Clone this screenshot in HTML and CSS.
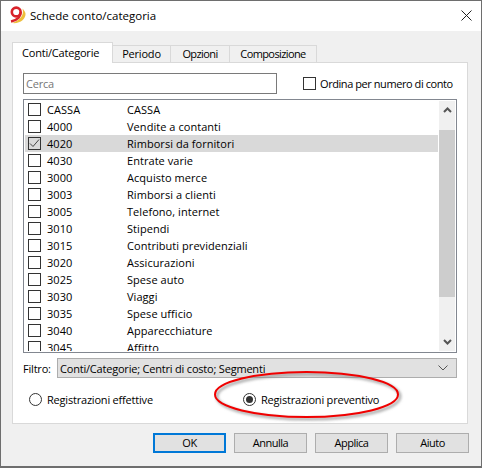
FILE: index.html
```html
<!DOCTYPE html>
<html lang="it">
<head>
  <meta charset="UTF-8">
  <title>Schede conto/categoria</title>
  <link rel="stylesheet" href="styles.css">
</head>
<body>
<div class="window">
  <div class="titlebar">
    <svg class="logo" width="20" height="20" viewBox="0 -1 20 20">
      <path d="M13.500 2.500C15.500 9 11 14.500 3 17c8 1 14-4 13.500-9.500-.3-2-2-4-3-5z" fill="#eebf3d"/>
      <circle cx="7.200" cy="6" r="4.400" fill="none" stroke="#d8232a" stroke-width="2.600"/>
      <path d="M11.600 6c.4 4-2.500 8-9.600 9.500" fill="none" stroke="#d8232a" stroke-width="2.600"/>
    </svg>
    <span class="title">Schede conto/categoria</span>
    <svg class="close" width="11" height="11" viewBox="0 0 11 11">
      <path d="M.5.500l10 10M10.500.500l-10 10" stroke="#222" stroke-width="1" fill="none"/>
    </svg>
  </div>

  <div class="body">
    <div class="tabs">
      <div class="tab active">Conti/Categorie</div>
      <div class="tab tab-period">Periodo</div>
      <div class="tab tab-options">Opzioni</div>
      <div class="tab tab-layout">Composizione</div>
    </div>

    <div class="pane">
      <div class="search-row">
        <div class="search">Cerca</div>
        <label class="sort-check"><span class="box"></span>Ordina per numero di conto</label>
      </div>

      <div class="list">
        <div class="rows">
          <div class="row"><span class="box"></span><span class="code">CASSA</span><span>CASSA</span></div>
          <div class="row"><span class="box"></span><span class="code">4000</span><span>Vendite a contanti</span></div>
          <div class="row selected">
            <span class="box">
              <svg width="13" height="13" viewBox="0 0 13 13"><path d="M2 6.500l3 3 6-7" fill="none" stroke="#444" stroke-width="1"/></svg>
            </span>
            <span class="code">4020</span><span>Rimborsi da fornitori</span>
          </div>
          <div class="row"><span class="box"></span><span class="code">4030</span><span>Entrate varie</span></div>
          <div class="row"><span class="box"></span><span class="code">3000</span><span>Acquisto merce</span></div>
          <div class="row"><span class="box"></span><span class="code">3003</span><span>Rimborsi a clienti</span></div>
          <div class="row"><span class="box"></span><span class="code">3005</span><span>Telefono, internet</span></div>
          <div class="row"><span class="box"></span><span class="code">3010</span><span>Stipendi</span></div>
          <div class="row"><span class="box"></span><span class="code">3015</span><span>Contributi previdenziali</span></div>
          <div class="row"><span class="box"></span><span class="code">3020</span><span>Assicurazioni</span></div>
          <div class="row"><span class="box"></span><span class="code">3025</span><span>Spese auto</span></div>
          <div class="row"><span class="box"></span><span class="code">3030</span><span>Viaggi</span></div>
          <div class="row"><span class="box"></span><span class="code">3035</span><span>Spese ufficio</span></div>
          <div class="row"><span class="box"></span><span class="code">3040</span><span>Apparecchiature</span></div>
          <div class="row"><span class="box"></span><span class="code">3045</span><span>Affitto</span></div>
        </div>
        <div class="scrollbar">
          <svg class="arrow" width="9" height="6" viewBox="0 0 9 6"><path d="M1 5l3.500-3.500L8 5" fill="none" stroke="#555" stroke-width="2"/></svg>
          <div class="track"><div class="thumb"></div></div>
          <svg class="arrow" width="9" height="6" viewBox="0 0 9 6"><path d="M1 1l3.500 3.500L8 1" fill="none" stroke="#555" stroke-width="2"/></svg>
        </div>
      </div>

      <div class="filter-row">
        <span class="filter-label">Filtro:</span>
        <div class="combo">
          <span>Conti/Categorie; Centri di costo; Segmenti</span>
          <svg width="10" height="6" viewBox="0 0 10 6"><path d="M.5.500L5 5 9.500.500" fill="none" stroke="#555" stroke-width="1"/></svg>
        </div>
      </div>

      <div class="radio-row">
        <label class="radio-item first"><span class="radio"></span>Registrazioni effettive</label>
        <label class="radio-item"><span class="radio on"></span>Registrazioni preventivo</label>
      </div>
    </div>

    <div class="buttons">
      <div class="btn default">OK</div>
      <div class="btn">Annulla</div>
      <div class="btn">Applica</div>
      <div class="btn">Aiuto</div>
    </div>
  </div>

  <svg class="highlight" width="200" height="56" viewBox="0 0 200 56">
    <defs>
      <filter id="soft" x="-10%" y="-20%" width="120%" height="140%"><feGaussianBlur stdDeviation="1.500"/></filter>
    </defs>
    <ellipse cx="92.500" cy="26.500" rx="91.500" ry="22.500" fill="none" stroke="#8a8a8a" stroke-width="2" filter="url(#soft)" transform="translate(2 2)"/>
    <ellipse cx="92.500" cy="26.500" rx="91.500" ry="22.500" fill="none" stroke="#f00000" stroke-width="2"/>
  </svg>
</div>
</body>
</html>
```

FILE: styles.css
```css
* {
  box-sizing: border-box;
}

body {
  margin: 0;
  font-family: "Open Sans", "Noto Sans", sans-serif;
  font-size: 11px;
  letter-spacing: -0.2px;
  color: #000;
}

.window {
  position: relative;
  width: 482px;
  height: 468px;
  border: 1px solid #6e6e6e;
  border-bottom-width: 2px;
  background-color: #f0f0f0;
}

.titlebar {
  display: flex;
  align-items: center;
  height: 30px;
  padding: 0 9px 2px 8px;
  background-color: #fff;
}

.logo {
  flex: none;
}

.title {
  flex: 1;
  margin-left: 1px;
  font-size: 11.5px;
  letter-spacing: 0;
}

.body {
  padding: 11px 11px 0;
}

.tabs {
  display: flex;
  align-items: flex-end;
  height: 20px;
}

.tab {
  height: 17px;
  margin-left: -1px;
  line-height: 16px;
  text-align: center;
  background-color: #f0f0f0;
  border: 1px solid #d9d9d9;
  border-bottom: none;
}

.tab.active {
  position: relative;
  z-index: 1;
  width: 101px;
  height: 21px;
  margin-left: 0;
  margin-bottom: -1px;
  padding-left: 9px;
  line-height: 19px;
  text-align: left;
  background-color: #fff;
}

.tab-period {
  width: 59px;
}

.tab-options {
  width: 60px;
  letter-spacing: -0.6px;
}

.tab-layout {
  width: 88px;
  letter-spacing: -0.6px;
}

.pane {
  width: 456px;
  height: 362px;
  padding: 10px 10px 0;
  background-color: #fff;
  border: 1px solid #d9d9d9;
}

.search-row {
  display: flex;
  align-items: center;
  height: 21px;
}

.search {
  flex: none;
  width: 254px;
  height: 21px;
  padding-left: 2px;
  line-height: 19px;
  color: #767676;
  border: 1px solid #7a7a7a;
}

.sort-check {
  display: flex;
  align-items: center;
  flex: none;
  margin-left: 26px;
  letter-spacing: -0.43px;
  white-space: nowrap;
}

.box {
  display: block;
  flex: none;
  width: 13px;
  height: 13px;
  margin-right: 6px;
  border: 1px solid #333;
  background-color: #fff;
}

.sort-check .box {
  margin-right: 4px;
}

.box svg {
  display: block;
  margin: -1px;
}

.list {
  display: flex;
  height: 254px;
  margin-top: 5px;
  padding: 1px;
  border: 1px solid #828790;
  overflow: hidden;
}

.rows {
  flex: 1;
  height: 250px;
  letter-spacing: 0.05px;
  overflow: hidden;
}

.row {
  display: flex;
  align-items: center;
  height: 17px;
  padding-left: 3px;
}

.row.selected {
  background-color: #d9d9d9;
}

.row.selected .box {
  background-color: #d9d9d9;
}

.code {
  width: 80px;
}

.scrollbar {
  display: flex;
  flex-direction: column;
  align-items: center;
  flex: none;
  width: 16px;
  margin-left: 1px;
  height: 250px;
  background-color: #f0f0f0;
}

.arrow {
  flex: none;
  margin: 6px 0;
}

.track {
  flex: 1;
  width: 100%;
}

.thumb {
  width: 100%;
  height: 167px;
  margin-top: 11px;
  background-color: #cdcdcd;
}

.filter-row {
  display: flex;
  align-items: center;
  margin-top: 5px;
}

.filter-label {
  width: 34px;
}

.combo {
  display: flex;
  align-items: center;
  justify-content: space-between;
  width: 400px;
  height: 20px;
  padding: 0 8px 0 2px;
  background-color: #e1e1e1;
  border: 1px solid #adadad;
}

.radio-row {
  display: flex;
  align-items: center;
  margin-top: 14px;
  padding-left: 6px;
}

.radio-item {
  display: flex;
  align-items: center;
}

.radio-item.first {
  width: 214px;
}

.radio {
  display: block;
  width: 13px;
  height: 13px;
  margin-right: 5px;
  border: 1px solid #333;
  border-radius: 50%;
  background-color: #fff;
}

.radio.on {
  padding: 2px;
  background-clip: content-box;
  background-color: #333;
}

.buttons {
  display: flex;
  gap: 8px;
  justify-content: flex-end;
  margin-top: 9px;
  padding-right: 1px;
}

.btn {
  width: 73px;
  height: 20px;
  line-height: 18px;
  letter-spacing: -0.5px;
  text-align: center;
  background-color: #e1e1e1;
  border: 1px solid #adadad;
}

.btn.default {
  line-height: 16px;
  border: 2px solid #0078d7;
}

.highlight {
  position: absolute;
  left: 213px;
  top: 367px;
}
```
